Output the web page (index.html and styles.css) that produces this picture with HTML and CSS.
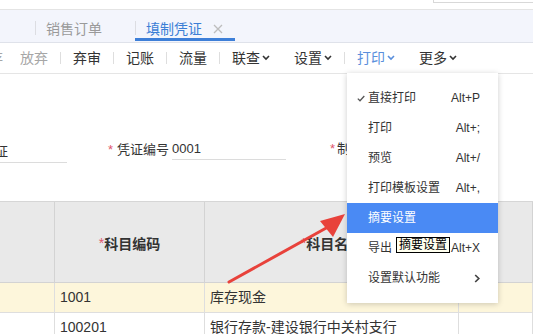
FILE: index.html
```html
<!DOCTYPE html>
<html lang="zh">
<head>
<meta charset="utf-8">
<title>填制凭证</title>
<link rel="stylesheet" href="styles.css">
</head>
<body>
<div class="page">
  <div class="topstrip"><div class="search"></div></div>

  <div class="tabbar">
    <div class="tab-blank"></div>
    <div class="tsep"></div>
    <div class="tab"><span class="tab-t">销售订单</span><svg class="x hide" width="10" height="10" viewBox="0 0 10 10"><path d="M1 1L9 9M9 1L1 9"/></svg></div>
    <div class="tsep"></div>
    <div class="tab active"><span class="tab-t">填制凭证</span><svg class="x" width="10" height="10" viewBox="0 0 10 10"><path d="M1 1L9 9M9 1L1 9"/></svg></div>
  </div>

  <div class="toolbar">
    <span class="ti dis cut">存</span>
    <span class="ti dis">放弃</span>
    <span class="bsep"></span>
    <span class="ti">弃审</span>
    <span class="bsep"></span>
    <span class="ti">记账</span>
    <span class="bsep"></span>
    <span class="ti">流量</span>
    <span class="bsep"></span>
    <span class="ti">联查<svg class="chev" width="8" height="6" viewBox="0 0 8 6"><path d="M1 1L4 4L7 1"/></svg></span>
    <span class="ti">设置<svg class="chev" width="8" height="6" viewBox="0 0 8 6"><path d="M1 1L4 4L7 1"/></svg></span>
    <span class="bsep"></span>
    <span class="ti blue">打印<svg class="chev" width="8" height="6" viewBox="0 0 8 6"><path d="M1 1L4 4L7 1"/></svg></span>
    <span class="ti">更多<svg class="chev" width="8" height="6" viewBox="0 0 8 6"><path d="M1 1L4 4L7 1"/></svg></span>
  </div>

  <div class="form">
    <div class="f1"><span class="cutc">证</span></div>
    <div class="f2">
      <span class="req">*</span><span class="lbl">凭证编号</span>
      <span class="inp">0001</span>
    </div>
    <div class="f3"><span class="req">*</span><span class="lbl">制</span></div>
  </div>

  <div class="table">
    <div class="th"></div>
    <div class="th"><span class="req">*</span>科目编码</div>
    <div class="th"><span class="req">*</span>科目名称</div>
    <div class="th"></div>

    <div class="td hl"></div>
    <div class="td hl">1001</div>
    <div class="td hl">库存现金</div>
    <div class="td hl"></div>

    <div class="td"></div>
    <div class="td">100201</div>
    <div class="td">银行存款-建设银行中关村支行</div>
    <div class="td"></div>
  </div>
</div>

<div class="menu">
  <div class="mi on">
    <svg class="check" width="8" height="7" viewBox="0 0 8 7"><path d="M0.8 3.6L3 5.8L7.3 1"/></svg>
    <span>直接打印</span><span class="sc">Alt+P</span>
  </div>
  <div class="mi"><span>打印</span><span class="sc">Alt+;</span></div>
  <div class="mi"><span>预览</span><span class="sc">Alt+/</span></div>
  <div class="mi"><span>打印模板设置</span><span class="sc">Alt+,</span></div>
  <div class="mi sel"><span>摘要设置</span><span class="sc"></span></div>
  <div class="mi"><span>导出</span><span class="tip">摘要设置</span><span class="sc">Alt+X</span></div>
  <div class="mi"><span>设置默认功能</span><svg class="more" width="6" height="9" viewBox="0 0 6 9"><path d="M1.2 1L4.8 4.5L1.2 8"/></svg></div>
</div>

<svg class="arrow" width="533" height="334" viewBox="0 0 533 334">
  <path d="M229 282 L328 227" stroke="#e8423b" stroke-width="3" stroke-linecap="round"/>
  <polygon points="345,214 320,221 333,237" fill="#e8423b"/>
</svg>
</body>
</html>
```

FILE: styles.css
```css
html, body {
  margin: 0;
  padding: 0;
}
body {
  width: 533px;
  height: 334px;
  overflow: hidden;
  position: relative;
  background: #fff;
  font-family: "Liberation Sans", "Noto Sans CJK SC", sans-serif;
  color: #333;
}
.page {
  width: 533px;
}

/* top strip */
.topstrip {
  height: 9px;
  border-bottom: 1px solid #e4e4e4;
  display: flex;
  justify-content: flex-end;
}
.search {
  width: 99px;
  height: 2px;
  border: 1px solid #d8d8d8;
  border-top: 0;
  border-right: 0;
}

/* tabs */
.tabbar {
  height: 32px;
  background: #f3f5fc;
  border-bottom: 1px solid #dfe2ea;
  display: flex;
  align-items: center;
}
.tab-blank {
  width: 35px;
}
.tsep {
  width: 1px;
  height: 14px;
  background: #dcdde2;
  margin-top: 4px;
}
.tab {
  position: relative;
  height: 32px;
  box-sizing: border-box;
  padding: 5px 12px 0 10px;
  display: flex;
  align-items: center;
  font-size: 14px;
  line-height: 20px;
  color: #9a9a9a;
}
.tab-t {
  white-space: nowrap;
}
.tab .x {
  margin-left: 11px;
  stroke: #bdbdbd;
  stroke-width: 1.3;
  fill: none;
}
.tab .x.hide {
  visibility: hidden;
}
.tab.active {
  color: #3b7ed6;
}
.tab.active::after {
  content: "";
  position: absolute;
  left: -1px;
  right: 0;
  bottom: 1px;
  height: 3px;
  background: #3d7fd8;
}

/* toolbar */
.toolbar {
  height: 30px;
  border-bottom: 1px solid #e5e5e5;
  display: flex;
  align-items: center;
  font-size: 14px;
  color: #333;
  white-space: nowrap;
}
.ti {
  padding: 0 12px;
  line-height: 20px;
  display: flex;
  align-items: center;
}
.ti.dis {
  color: #a6a6a6;
}
.ti.cut {
  margin-left: -11px;
  padding: 0 5px 0 0;
}
.ti.blue {
  color: #5a8fdc;
}
.chev {
  margin-left: 2px;
  fill: none;
  stroke: #333;
  stroke-width: 1.6;
}
.ti.blue .chev {
  stroke: #5a8fdc;
}
.bsep {
  width: 1px;
  height: 12px;
  background: #dedede;
}

/* form */
.form {
  height: 127px;
  box-sizing: border-box;
  padding-top: 65px;
  display: flex;
  align-items: flex-start;
  font-size: 13px;
  color: #333;
  white-space: nowrap;
}
.f1 {
  width: 67px;
  height: 20px;
  margin-top: 3px;
  border-bottom: 1px solid #dcdcdc;
  line-height: 20px;
  overflow: hidden;
}
.cutc {
  margin-left: -5px;
}
.f2 {
  margin-left: 41px;
  display: flex;
  align-items: center;
  line-height: 20px;
}
.req {
  color: #e0566e;
}
.f2 .req, .f3 .req {
  width: 9px;
}
.lbl {
  margin-right: 3px;
}
.inp {
  width: 114px;
  height: 20px;
  border-bottom: 1px solid #dcdcdc;
}
.f3 {
  margin-left: 44px;
  display: flex;
  line-height: 20px;
}
.f3 .req {
  width: 7px;
}

/* table */
.table {
  border-top: 1px solid #d6d6d6;
  display: grid;
  grid-template-columns: 55px 150px 254px 1fr;
}
.th {
  height: 81px;
  box-sizing: border-box;
  background: #e9e9e9;
  border-right: 1px solid #d3d3d3;
  border-bottom: 1px solid #d3d3d3;
  display: flex;
  align-items: center;
  justify-content: center;
  font-size: 14px;
  font-weight: bold;
  color: #333;
  padding-top: 2px;
}
.th .req {
  font-weight: normal;
}
.td {
  height: 30px;
  box-sizing: border-box;
  border-right: 1px solid #dedede;
  border-bottom: 1px solid #dedede;
  padding-left: 5px;
  font-size: 14px;
  line-height: 29px;
  color: #333;
  white-space: nowrap;
  overflow: hidden;
}
.td.hl {
  background: #fdf6db;
}

/* dropdown menu */
.menu {
  position: absolute;
  left: 347px;
  top: 73px;
  width: 151px;
  padding: 10px 0;
  background: #fff;
  box-shadow: 0 1px 6px rgba(0, 0, 0, 0.2);
  font-size: 12px;
  color: #333;
}
.mi {
  position: relative;
  height: 30px;
  line-height: 30px;
  padding: 0 18px 0 21px;
  display: flex;
  justify-content: space-between;
  align-items: center;
  white-space: nowrap;
}
.mi.sel {
  background: #4a8af4;
  color: #fff;
}
.check {
  position: absolute;
  left: 10px;
  top: 12px;
  fill: none;
  stroke: #555;
  stroke-width: 1.3;
}
.more {
  fill: none;
  stroke: #444;
  stroke-width: 1.7;
}
.tip {
  position: absolute;
  left: 49px;
  top: 4px;
  height: 14px;
  line-height: 14px;
  padding: 0 2px;
  border: 1px solid #000;
  background: #ffffef;
  color: #000;
  font-size: 12px;
}

/* annotation arrow */
.arrow {
  position: absolute;
  left: 0;
  top: 0;
  pointer-events: none;
}
```
